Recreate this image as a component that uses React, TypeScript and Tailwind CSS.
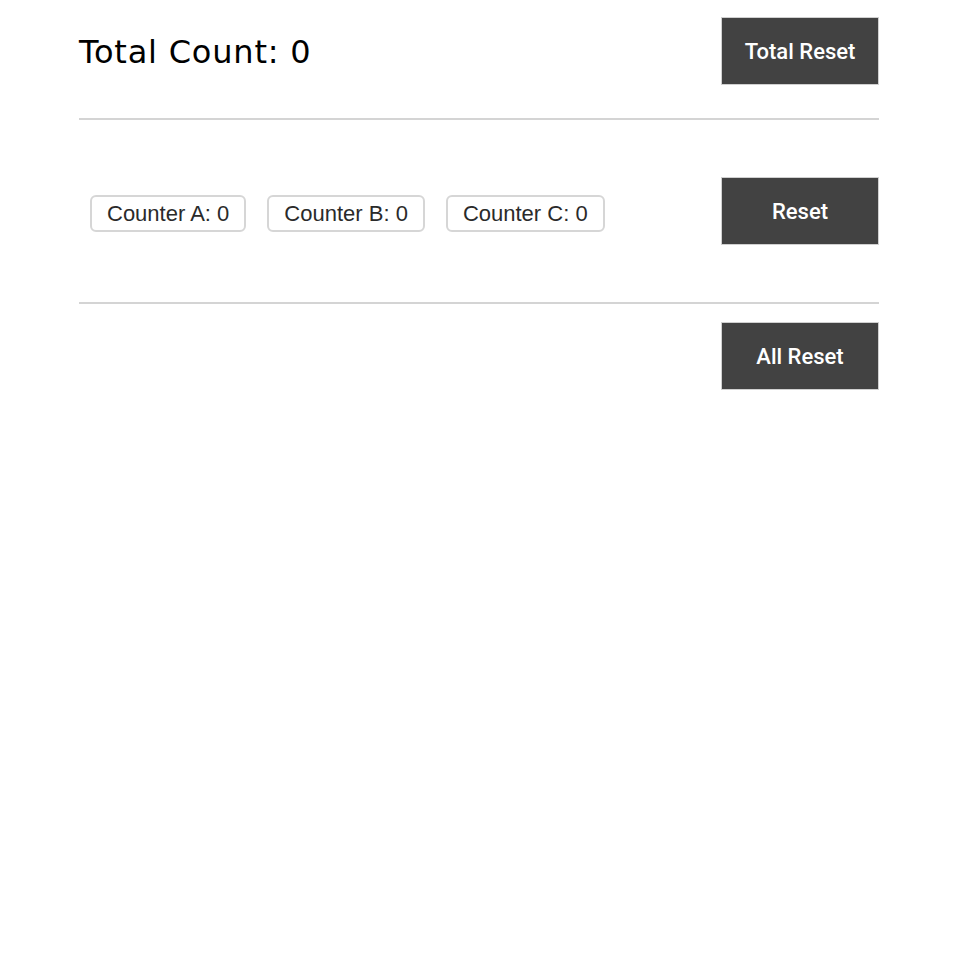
import { useState } from "react";

export default function App() {
  const [counts, setCounts] = useState({ A: 0, B: 0, C: 0 });
  const total = counts.A + counts.B + counts.C;

  const inc = (k: "A" | "B" | "C") => setCounts({ ...counts, [k]: counts[k] + 1 });
  const reset = () => setCounts({ A: 0, B: 0, C: 0 });

  const darkBtn =
    "w-[158px] h-[68px] bg-[#424242] border border-[#d0d0d0] text-white text-[22px] font-['Roboto',sans-serif] font-medium";

  return (
    <div className="min-h-screen bg-white">
      <div className="w-[800px] mx-auto pt-[17px]">
        <div className="flex items-center justify-between">
          <h1 className="text-[32px] tracking-[0.8px] text-black font-['DejaVu_Sans',sans-serif] pt-[2px]">
            Total Count: {total}
          </h1>
          <button className={darkBtn} onClick={reset}>
            Total Reset
          </button>
        </div>

        <hr className="mt-[33px] border-0 h-[2px] bg-[#d4d4d4]" />

        <div className="flex items-center justify-between mt-[57px] mb-[57px]">
          <div className="flex gap-[21px] pl-[11px] pt-[4px]">
            {(["A", "B", "C"] as const).map((k) => (
              <button
                key={k}
                onClick={() => inc(k)}
                className="h-[37px] px-[15px] rounded-[6px] border-2 border-[#d6d6d6] bg-white text-[22px] text-[#2a2a2a] font-['Liberation_Sans',sans-serif]"
              >
                Counter {k}: {counts[k]}
              </button>
            ))}
          </div>
          <button className={darkBtn} onClick={reset}>
            Reset
          </button>
        </div>

        <hr className="border-0 h-[2px] bg-[#d4d4d4]" />

        <div className="flex justify-end mt-[18px]">
          <button className={darkBtn} onClick={reset}>
            All Reset
          </button>
        </div>
      </div>
    </div>
  );
}
